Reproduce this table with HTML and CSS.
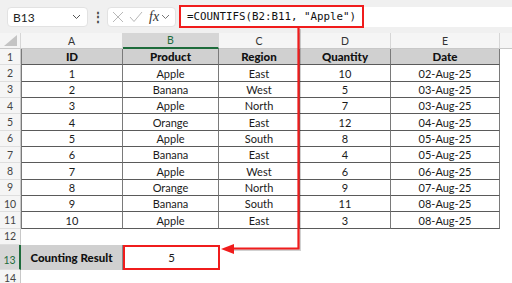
FILE: index.html
```html
<!DOCTYPE html>
<html>
<head>
<meta charset="utf-8">
<link rel="stylesheet" href="styles.css">
</head>
<body>
<div class="app">
  <div class="toolbar">
    <div class="namebox"><span>B13</span>
      <svg class="chev" width="9" height="6" viewBox="0 0 9 6"><path d="M1 1 L4.5 4.5 L8 1" fill="none" stroke="#555" stroke-width="1"/></svg>
    </div>
    <div class="dots">⋮</div>
    <div class="fxbox">
      <svg width="12" height="12" viewBox="0 0 12 12"><path d="M1 1 L11 11 M11 1 L1 11" stroke="#b8b8b8" stroke-width="1" fill="none"/></svg>
      <svg width="14" height="12" viewBox="0 0 14 12"><path d="M1 6 L5 10.5 L13 1" stroke="#b8b8b8" stroke-width="1" fill="none"/></svg>
      <span class="fx">fx</span>
      <svg class="chev" width="9" height="6" viewBox="0 0 9 6"><path d="M1 1 L4.5 4.5 L8 1" fill="none" stroke="#777" stroke-width="1"/></svg>
    </div>
    <div class="formulabar"><span class="formula">=COUNTIFS(B2:B11, "Apple")</span></div>
  </div>

  <div class="sheet">
    <div class="corner"><svg width="13" height="11" viewBox="0 0 13 11"><polygon points="13,0 13,11 0,11" fill="#c4c4c4"/></svg></div>
    <div class="ch">A</div><div class="ch sel">B</div><div class="ch">C</div><div class="ch">D</div><div class="ch">E</div><div class="ch last"></div>

    <div class="rh">1</div><div class="c hd first">ID</div><div class="c hd">Product</div><div class="c hd">Region</div><div class="c hd">Quantity</div><div class="c hd">Date</div><div class="e"></div>
    <div class="rh">2</div><div class="c first">1</div><div class="c">Apple</div><div class="c">East</div><div class="c">10</div><div class="c">02-Aug-25</div><div class="e"></div>
    <div class="rh">3</div><div class="c first">2</div><div class="c">Banana</div><div class="c">West</div><div class="c">5</div><div class="c">03-Aug-25</div><div class="e"></div>
    <div class="rh">4</div><div class="c first">3</div><div class="c">Apple</div><div class="c">North</div><div class="c">7</div><div class="c">03-Aug-25</div><div class="e"></div>
    <div class="rh">5</div><div class="c first">4</div><div class="c">Orange</div><div class="c">East</div><div class="c">12</div><div class="c">04-Aug-25</div><div class="e"></div>
    <div class="rh">6</div><div class="c first">5</div><div class="c">Apple</div><div class="c">South</div><div class="c">8</div><div class="c">05-Aug-25</div><div class="e"></div>
    <div class="rh">7</div><div class="c first">6</div><div class="c">Banana</div><div class="c">East</div><div class="c">4</div><div class="c">05-Aug-25</div><div class="e"></div>
    <div class="rh">8</div><div class="c first">7</div><div class="c">Apple</div><div class="c">West</div><div class="c">6</div><div class="c">06-Aug-25</div><div class="e"></div>
    <div class="rh">9</div><div class="c first">8</div><div class="c">Orange</div><div class="c">North</div><div class="c">9</div><div class="c">07-Aug-25</div><div class="e"></div>
    <div class="rh">10</div><div class="c first">9</div><div class="c">Banana</div><div class="c">South</div><div class="c">11</div><div class="c">08-Aug-25</div><div class="e"></div>
    <div class="rh">11</div><div class="c first">10</div><div class="c">Apple</div><div class="c">East</div><div class="c">3</div><div class="c">08-Aug-25</div><div class="e"></div>

    <div class="rh">12</div><div class="e"></div><div class="e"></div><div class="e"></div><div class="e"></div><div class="e"></div><div class="e"></div>
    <div class="rh selrow">13</div><div class="label">Counting Result</div><div class="result">5</div><div class="e"></div><div class="e"></div><div class="e"></div><div class="e"></div>
    <div class="rh">14</div><div class="e"></div><div class="e"></div><div class="e"></div><div class="e"></div><div class="e"></div><div class="e"></div>
  </div>

  <svg class="arrow" width="512" height="283" viewBox="0 0 512 283">
    <polyline points="300,29 300,250 232,250" fill="none" stroke="rgba(0,0,0,0.18)" stroke-width="2"/>
    <polyline points="298.5,28 298.5,248.5 230,248.5" fill="none" stroke="#f01c1c" stroke-width="2.2"/>
    <polygon points="221,249 234,244 234,254" fill="#f01c1c"/>
  </svg>
</div>
</body>
</html>
```

FILE: styles.css
```css
* { box-sizing: border-box; }
html, body { margin: 0; padding: 0; background: #fff; }
body { width: 512px; height: 283px; overflow: hidden; font-family: Lato, "Open Sans", sans-serif; }
.app { position: relative; width: 512px; height: 283px; }

.toolbar {
  height: 33px;
  background: #f0f0f0;
  display: flex;
  align-items: flex-start;
  padding: 7px 0 0 7px;
}
.namebox {
  width: 81px; height: 20px;
  background: #fff;
  border: 1px solid #e2e2e2;
  border-radius: 4px;
  display: flex; align-items: center; justify-content: space-between;
  padding: 0 6px 0 5px;
  font-size: 12px; color: #222;
}
.dots { width: 19px; text-align: center; font-size: 12px; color: #444; line-height: 20px; font-weight: bold; }
.fxbox {
  width: 69px; height: 20px;
  background: #fff;
  border: 1px solid #e2e2e2;
  border-radius: 4px;
  display: flex; align-items: center;
  padding: 0 3px 0 4px; gap: 5px;
}
.fx { font-family: "Liberation Serif", serif; font-style: italic; font-size: 14px; color: #333; margin-left: 1px; }
.fxbox .chev { margin-left: -3px; }
.formulabar {
  flex: 1; height: 20px; margin-left: 3px;
  background: #fff;
  position: relative;
}
.formula {
  position: absolute; left: 0; top: -2px;
  width: 185px; height: 23px;
  border: 2px solid #f01c1c;
  font-family: "DejaVu Sans Mono", monospace;
  font-size: 10.8px; color: #111;
  padding-left: 6px; line-height: 19px;
  white-space: nowrap;
}

.sheet {
  display: grid;
  grid-template-columns: 21px 102px 96px 81px 91px 109px 1fr;
  grid-template-rows: 16px repeat(12, 16.35px) 25px 17px;
  font-size: 11px; color: #1a1a1a;
}
.sheet > div { display: flex; align-items: center; justify-content: center; overflow: hidden; white-space: nowrap; }
.corner { background: #f5f5f5; border-right: 1px solid #d6d6d6; border-bottom: 1px solid #c8c8c8; justify-content: flex-end !important; align-items: flex-end !important; padding: 0 3px 2px 0; }
.ch { background: #f5f5f5; border-right: 1px solid #d6d6d6; border-bottom: 1px solid #c8c8c8; color: #333; font-size: 10.5px; }
.ch.sel { background: #d6d6d6; color: #1d6b3b; border-bottom: 2px solid #1d6b3b; }
.ch.last { border-right: none; }
.rh { background: #f5f5f5; border-right: 1px solid #c8c8c8; border-bottom: 1px solid #dedede; color: #444; font-size: 10.5px; }
.rh.selrow { background: #d6d6d6; color: #1d6b3b; border-right: 2px solid #1d6b3b; padding-top: 6px; }
.c { border-right: 1px solid #7a7a7a; border-bottom: 1px solid #5a5a5a; }
.c.first { border-left: 1px solid #7a7a7a; }
.c.hd { background: #d0d0d0; font-weight: 900; color: #111; font-size: 11.5px; }
.label { background: #d0d0d0; font-weight: 900; color: #111; font-size: 11.5px; border-right: 1px solid #888; }
.result { border: 2px solid #f01c1c; margin: 0 -1px 0 0; font-size: 11.5px; }

.arrow { position: absolute; left: 0; top: 0; pointer-events: none; }
```
